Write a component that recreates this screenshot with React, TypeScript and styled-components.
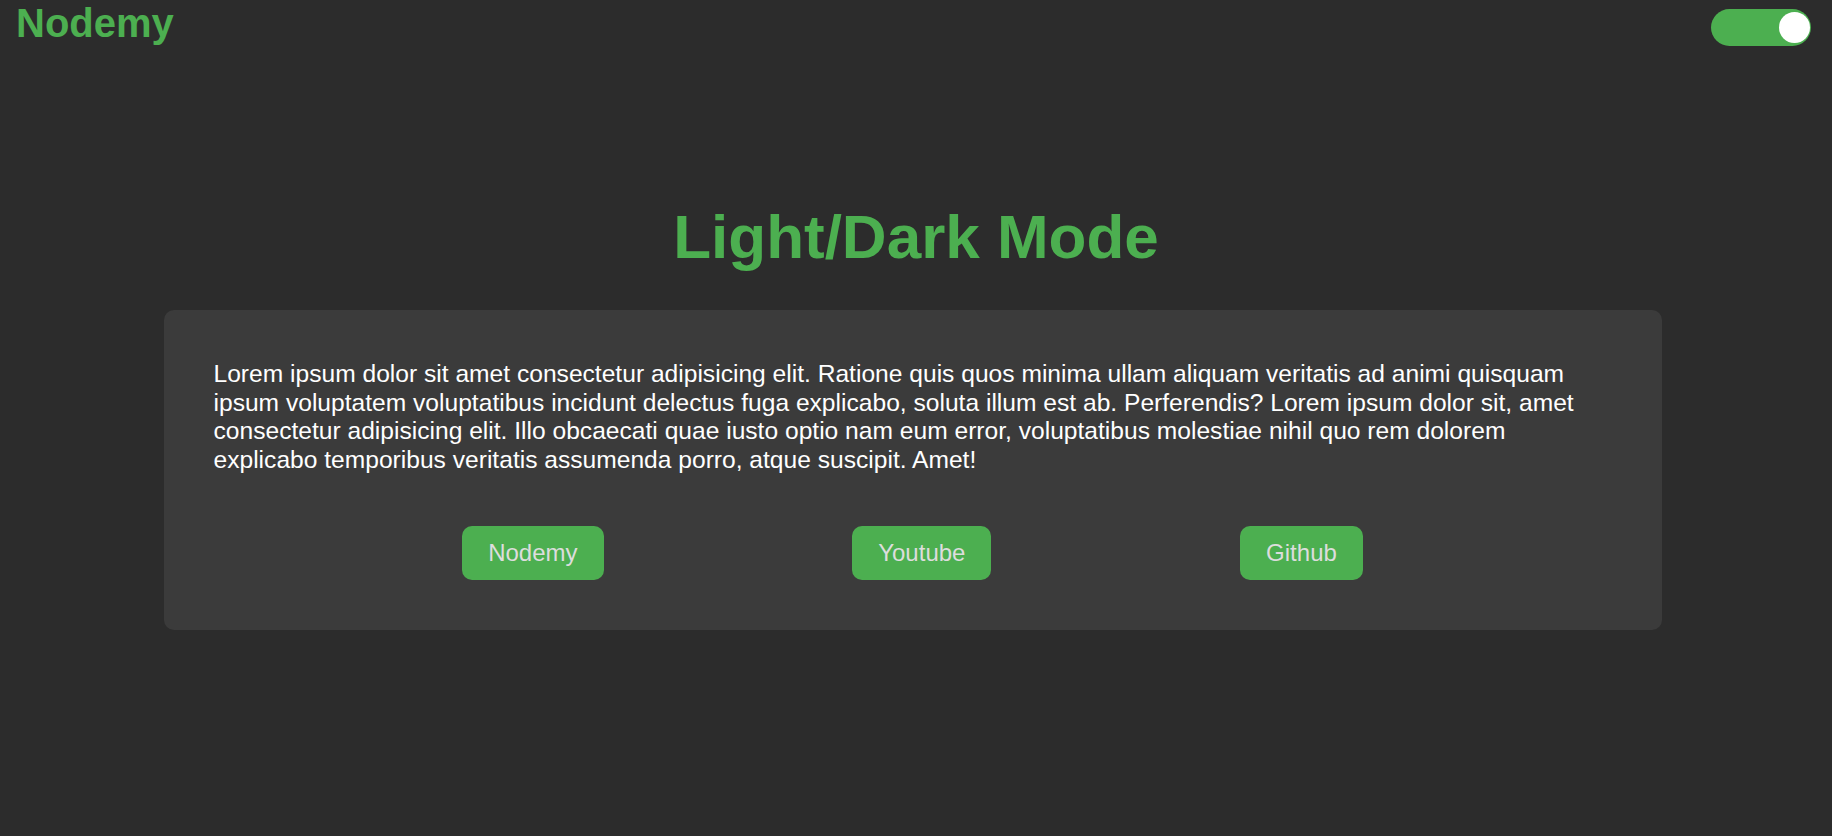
import React, { useState } from 'react';
import styled, { createGlobalStyle } from 'styled-components';

const GlobalStyle = createGlobalStyle`
  body {
    margin: 0;
    background-color: #2c2c2c;
    font-family: 'Liberation Sans', Arial, sans-serif;
  }
`;

const Page = styled.div`
  min-height: 836px;
  background-color: #2c2c2c;
`;

const Header = styled.header`
  display: flex;
  justify-content: space-between;
  align-items: flex-start;
  padding: 1px 21px 0 16px;
`;

const Logo = styled.h1`
  margin: 0;
  font-size: 40px;
  font-weight: 700;
  color: #4caf50;
`;

const Toggle = styled.button<{ on: boolean }>`
  position: relative;
  margin-top: 8px;
  width: 100px;
  height: 37px;
  border: none;
  border-radius: 19px;
  padding: 0;
  cursor: pointer;
  background-color: ${({ on }) => (on ? '#4caf50' : '#ccc')};
`;

const Knob = styled.span<{ on: boolean }>`
  position: absolute;
  top: 3px;
  left: ${({ on }) => (on ? '68px' : '3px')};
  width: 31px;
  height: 31px;
  border-radius: 50%;
  background-color: #fff;
`;

const Main = styled.main`
  display: flex;
  flex-direction: column;
  align-items: center;
  padding-top: 155px;
`;

const Title = styled.h2`
  margin: 0 0 38px;
  font-size: 62px;
  font-weight: 700;
  color: #4caf50;
  text-align: center;
`;

const Card = styled.section`
  width: 1498px;
  box-sizing: border-box;
  padding: 50px;
  border-radius: 10px;
  background-color: #3b3b3b;
  margin-right: 7px;
`;

const Text = styled.p`
  margin: 0;
  font-size: 24.6px;
  line-height: 28.7px;
  color: #fff;
`;

const Links = styled.div`
  display: flex;
  justify-content: space-evenly;
  margin-top: 51px;
`;

const LinkButton = styled.a`
  display: inline-block;
  padding: 13px 26px;
  border-radius: 10px;
  font-size: 24px;
  line-height: 28px;
  color: #dddddd;
  background-color: #4caf50;
  text-decoration: none;
  cursor: pointer;
`;

const linksData = [
  { id: 1, text: 'Nodemy', path: '#' },
  { id: 2, text: 'Youtube', path: '#' },
  { id: 3, text: 'Github', path: '#' }
];

function App() {
  const [dark, setDark] = useState(true);

  return (
    <Page>
      <GlobalStyle />
      <Header>
        <Logo>Nodemy</Logo>
        <Toggle type="button" on={dark} onClick={() => setDark((prev) => !prev)}>
          <Knob on={dark} />
        </Toggle>
      </Header>
      <Main>
        <Title>Light/Dark Mode</Title>
        <Card>
          <Text>
            Lorem ipsum dolor sit amet consectetur adipisicing elit. Ratione quis quos minima ullam
            aliquam veritatis ad animi quisquam ipsum voluptatem voluptatibus incidunt delectus fuga
            explicabo, soluta illum est ab. Perferendis? Lorem ipsum dolor sit, amet consectetur
            adipisicing elit. Illo obcaecati quae iusto optio nam eum error, voluptatibus molestiae
            nihil quo rem dolorem explicabo temporibus veritatis assumenda porro, atque suscipit.
            Amet!
          </Text>
          <Links>
            {linksData.map((item) => (
              <LinkButton key={item.id} href={item.path}>
                {item.text}
              </LinkButton>
            ))}
          </Links>
        </Card>
      </Main>
    </Page>
  );
}

export default App;
